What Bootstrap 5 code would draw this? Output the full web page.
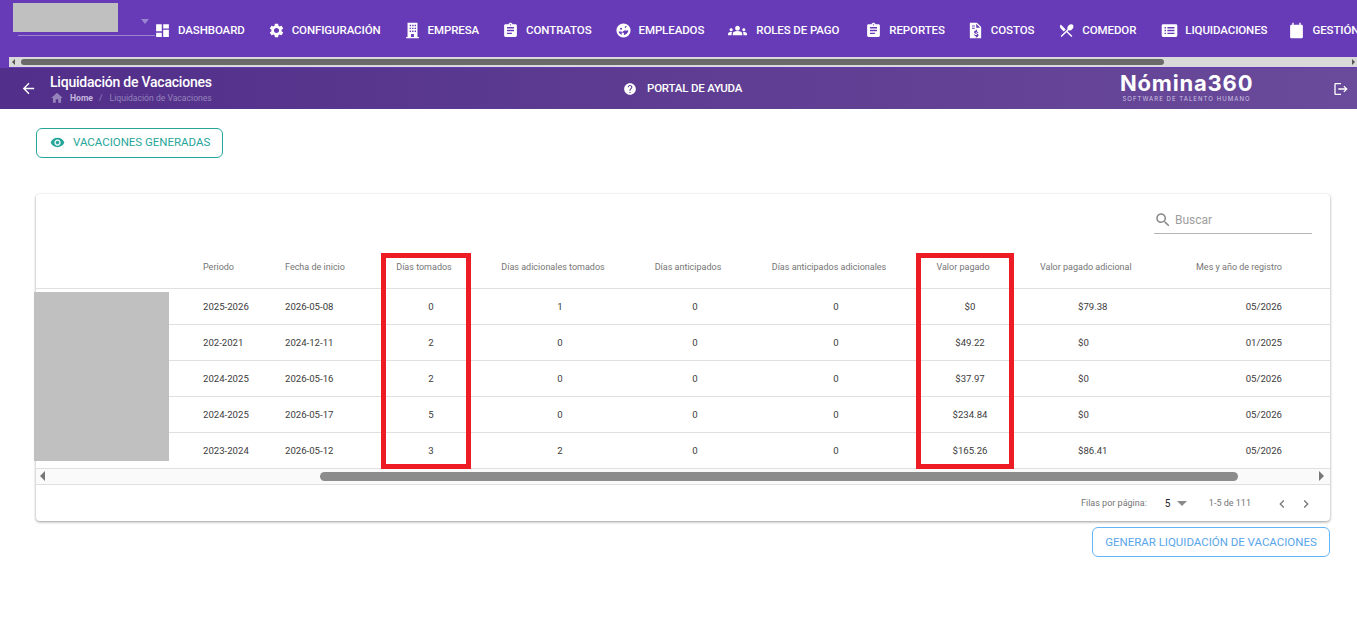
<!DOCTYPE html>
<html lang="es">
<head>
  <meta charset="UTF-8" />
  <meta name="viewport" content="width=device-width, initial-scale=1.0"/>
  <title>Liquidación de Vacaciones - Nómina360</title>
  <link href="https://cdn.jsdelivr.net/npm/bootstrap@5.3.0/dist/css/bootstrap.min.css" rel="stylesheet">
  <style>
    body { font-family: Roboto, sans-serif; background: #fff; overflow: hidden; height: 629px; }
    svg { fill: currentColor; flex: none; display: block; }

    .topbar { background: #673ab7; height: 68px; color: #fff; overflow: hidden; }
    .topbar-row { height: 57px; padding-top: 4px; gap: 22px; white-space: nowrap; }
    .brand-box { width: 131px; height: 57px; flex: none; position: relative; }
    .brand-gray { position: absolute; left: 13px; top: 1px; width: 105px; height: 29px; background: #c0c0c0; }
    .brand-line { position: absolute; left: 18px; top: 33px; width: 137px; height: 1px; background: #9c84d0; }
    .brand-caret { position: absolute; left: 141px; top: 17px; border: 4.5px solid transparent; border-top: 5px solid #9c84d0; border-bottom: 0; }
    .menu-item { gap: 7px; font-size: 11.5px; font-weight: 500; letter-spacing: -.1px; flex: none; }
    .menu-item svg { width: 17px; height: 17px; margin-left: 1px; }
    .menu-item svg.wide { width: 19px; height: 19px; margin: 0 2px; }
    .menu-item:nth-child(8) { margin-left: 3px; }
    .menu-item:nth-child(9) { margin-left: -1px; }
    .menu-item:nth-child(10) { margin-left: 1px; }
    .menu-item:nth-child(11) { margin-left: 2px; }
    .menu-item:nth-child(12) { margin-left: -2px; }
    .top-scroll { height: 10px; margin-left: 9px; background: #d9d9d9; gap: 3px; padding-left: 3px; }
    .top-thumb { width: 1143px; height: 6px; background: #6a6a6a; border-radius: 3px; margin-left: 3px; }
    .arrow-l { width: 0; height: 0; border: 3px solid transparent; border-right: 3px solid #555; border-left: 0; }
    .arrow-r { width: 0; height: 0; border: 3px solid transparent; border-left: 3px solid #555; border-right: 0; margin-left: auto; margin-right: 2px; }

    .subbar { height: 41px; background: linear-gradient(90deg, #512f8a, #6a4a9a); color: #fff; position: relative; }
    .back-col { width: 50px; padding-left: 20px; flex: none; }
    .title-col { width: 559px; flex: none; margin-top: 1px; }
    .page-title { font-size: 14px; font-weight: 500; line-height: 16px; letter-spacing: -.22px; }
    .crumbs { font-size: 8.6px; line-height: 12px; color: #9583bb; gap: 6px; margin-top: 1px; }
    .crumbs b { font-weight: 700; color: #c4b6dd; }
    .crumbs span:last-child { margin-left: 1px; }
    .help-link { width: 495px; flex: none; gap: 10px; font-size: 11.5px; font-weight: 500; letter-spacing: -.2px; margin-left: 14px; }
    .logo-box { width: 133px; flex: none; text-align: center; margin: -2px 0 0 2px; }
    .logo-name { font-family: Inter, sans-serif; font-weight: 700; font-size: 22px; line-height: 22px; letter-spacing: .8px; white-space: nowrap; }
    .logo-sub { font-family: Inter, sans-serif; font-size: 6px; line-height: 8px; letter-spacing: 1.05px; color: #cfc4e2; white-space: nowrap; margin-top: 1px; }

    .btn-teal { display: inline-flex; align-items: center; gap: 8px; height: 30px; width: 187px; padding: 0 0 0 13px; font-size: 11.5px; letter-spacing: -.02px; color: #26a69a; border: 1px solid #26a69a; border-radius: 6px; background: #fff; margin: 19px 0 0 36px; }
    .btn-teal svg { margin-top: -2px; }
    .btn-sky { display: block; height: 30px; width: 238px; padding: 1px 0 0; font-size: 11.5px; letter-spacing: -.02px; color: #58a6ea; border: 1px solid #64b5f6; border-radius: 6px; background: #fff; margin: 6px 27px 0 auto; }

    .data-card { width: 1294px; height: 327px; margin: 36px 0 0 36px; border: 0; border-radius: 4px; box-shadow: 0 1px 3px rgba(0,0,0,.4); position: relative; }
    .search-row { height: 56px; padding: 14px 18px 0 0; }
    .search-box { width: 158px; height: 26px; border-bottom: 1px solid #b5b5b5; font-size: 12px; color: #9e9e9e; gap: 3px; padding-bottom: 1px; }
    .search-box svg { width: 18px; height: 18px; color: #8a8a8a; }

    .vac-table { table-layout: fixed; width: 1294px; margin: 0; font-size: 9.6px; color: #3c3c3c; }
    .vac-table th, .vac-table td { padding: 0; border-bottom: 1px solid #e0e0e0; white-space: nowrap; vertical-align: middle; }
    .vac-table th { height: 38px; padding-bottom: 2px; font-weight: 400; font-size: 9px; color: #757575; }
    .vac-table td { height: 36px; padding-top: 2px; color: #3c3c3c; }
    .pl-16 { padding-left: 16px !important; }
    .shift-h { padding-right: 14px !important; }
    .pay-h { padding-left: 21px !important; }
    .pay-v { padding-left: 59px !important; }
    .pr-16 { padding-right: 16px !important; text-align: right; }

    .table-scroll { height: 16px; background: #fafafa; border-bottom: 1px solid #e0e0e0; padding: 0 6px 0 4px; }
    .thumb-space { width: 275px; flex: none; }
    .table-thumb { width: 918px; height: 9px; border-radius: 5px; background: #8c8c8c; flex: none; }
    .arrow-big-l { width: 0; height: 0; border: 5px solid transparent; border-right: 5px solid #777; border-left: 0; }
    .arrow-big-r { width: 0; height: 0; border: 5px solid transparent; border-left: 5px solid #777; border-right: 0; margin-left: auto; }

    .pager { height: 36px; padding-top: 2px; font-size: 9px; color: #757575; padding-left: 1045px; }
    .pager-size { color: #222; font-size: 10px; margin-left: 18px; width: 12px; }
    .pager-caret { border: 5px solid transparent; border-top: 5px solid #8a8a8a; border-bottom: 0; width: 0; height: 0; }
    .pager-range { margin-left: 22px; width: 65px; }
    .pager svg { width: 16px; height: 16px; color: #777; }

    .red-mark { position: absolute; border: 5px solid #ed1c24; top: 59px; height: 216px; }
    .gray-mark { position: absolute; left: -2px; top: 98px; width: 135px; height: 169px; background: #c0c0c0; }
  </style>
</head>
<body>

<div class="topbar">
  <div class="topbar-row d-flex align-items-center">
    <div class="brand-box">
      <div class="brand-gray"></div>
      <div class="brand-line"></div>
      <div class="brand-caret"></div>
    </div>
    <div class="menu-item d-flex align-items-center"><svg viewBox="0 0 24 24"><path d="M3 13h8V3H3v10zm0 8h8v-6H3v6zm10 0h8V11h-8v10zm0-18v6h8V3h-8z"/></svg>DASHBOARD</div>
    <div class="menu-item d-flex align-items-center"><svg viewBox="0 0 24 24"><path d="M19.14 12.94c.04-.3.06-.61.06-.94 0-.32-.02-.64-.07-.94l2.03-1.58c.18-.14.23-.41.12-.61l-1.92-3.32c-.12-.22-.37-.29-.59-.22l-2.39.96c-.5-.38-1.03-.7-1.62-.94l-.36-2.54c-.04-.24-.24-.41-.48-.41h-3.84c-.24 0-.43.17-.47.41l-.36 2.54c-.59.24-1.13.57-1.62.94l-2.39-.96c-.22-.08-.47 0-.59.22L2.74 8.87c-.12.21-.08.47.12.61l2.03 1.58c-.05.3-.09.63-.09.94s.02.64.07.94l-2.03 1.58c-.18.14-.23.41-.12.61l1.92 3.32c.12.22.37.29.59.22l2.39-.96c.5.38 1.03.7 1.62.94l.36 2.54c.05.24.24.41.48.41h3.84c.24 0 .44-.17.47-.41l.36-2.54c.59-.24 1.13-.56 1.62-.94l2.39.96c.22.08.47 0 .59-.22l1.92-3.32c.12-.22.07-.47-.12-.61l-2.01-1.58zM12 15.6c-1.98 0-3.6-1.62-3.6-3.6s1.62-3.6 3.6-3.6 3.6 1.62 3.6 3.6-1.62 3.6-3.6 3.6z"/></svg>CONFIGURACIÓN</div>
    <div class="menu-item d-flex align-items-center"><svg viewBox="0 0 24 24"><path fill-rule="evenodd" d="M5 1h14v20h2v2H3v-2h2V1zm3 3v2h2V4H8zm3.5 0v2h2V4h-2zM15 4v2h2V4h-2zM8 8v2h2V8H8zm3.5 0v2h2V8h-2zM15 8v2h2V8h-2zM8 12v2h2v-2H8zm3.5 0v2h2v-2h-2zm3.500 0v2h2v-2h-2zM10 17v4h4v-4h-4z"/></svg>EMPRESA</div>
    <div class="menu-item d-flex align-items-center"><svg viewBox="0 0 24 24"><path d="M19 3h-4.180C14.400 1.840 13.300 1 12 1c-1.300 0-2.400.84-2.820 2H5c-1.100 0-2 .9-2 2v14c0 1.100.9 2 2 2h14c1.100 0 2-.9 2-2V5c0-1.100-.9-2-2-2zm-7 0c.55 0 1 .45 1 1s-.45 1-1 1-1-.45-1-1 .45-1 1-1zm2 14H7v-2h7v2zm3-4H7v-2h10v2zm0-4H7V7h10v2z"/></svg>CONTRATOS</div>
    <div class="menu-item d-flex align-items-center"><svg viewBox="0 0 24 24"><path fill-rule="evenodd" d="M12 2a10 10 0 1 0 0 20 10 10 0 0 0 0-20zM7 9.500a1.500 1.500 0 1 1 3 0 1.500 1.500 0 0 1-3 0zm7-3.500h3l-3 3zM13 12h6c-.4 3-3 6-6.500 6.500V15H9l4-3zM5 13.500h4.500V18C7 17.500 5.500 15.500 5 13.500z"/></svg>EMPLEADOS</div>
    <div class="menu-item d-flex align-items-center"><svg class="wide" viewBox="0 0 24 24"><path d="M12 12.750c1.630 0 3.070.39 4.240.9 1.080.48 1.760 1.560 1.760 2.730V18H6v-1.610c0-1.180.68-2.260 1.760-2.730 1.170-.52 2.610-.91 4.240-.91zM4 13c1.100 0 2-.9 2-2s-.9-2-2-2-2 .9-2 2 .9 2 2 2zm1.130 1.100c-.37-.06-.74-.1-1.130-.1-.99 0-1.930.21-2.780.58C.48 14.900 0 15.620 0 16.430V18h4.500v-1.610c0-.83.23-1.610.63-2.290zM20 13c1.100 0 2-.9 2-2s-.9-2-2-2-2 .9-2 2 .9 2 2 2zm4 3.430c0-.81-.48-1.530-1.220-1.850-.85-.37-1.790-.58-2.780-.58-.39 0-.76.04-1.130.1.4.68.63 1.460.63 2.290V18H24v-1.570zM12 6c1.660 0 3 1.340 3 3s-1.340 3-3 3-3-1.340-3-3 1.340-3 3-3z"/></svg>ROLES DE PAGO</div>
    <div class="menu-item d-flex align-items-center"><svg viewBox="0 0 24 24"><path d="M19 3h-4.180C14.400 1.840 13.300 1 12 1c-1.300 0-2.400.84-2.820 2H5c-1.100 0-2 .9-2 2v14c0 1.100.9 2 2 2h14c1.100 0 2-.9 2-2V5c0-1.100-.9-2-2-2zm-7 0c.55 0 1 .45 1 1s-.45 1-1 1-1-.45-1-1 .45-1 1-1zm2 14H7v-2h7v2zm3-4H7v-2h10v2zm0-4H7V7h10v2z"/></svg>REPORTES</div>
    <div class="menu-item d-flex align-items-center"><svg viewBox="0 0 24 24"><path fill-rule="evenodd" d="M4 1h10l6 6v16H4V1zm9 1.500V8h5.500L13 2.500zM7 5v1.500h4V5H7zm0 3v1.500h4V8H7zm5.400 3v1.100c-1.500.3-2.400 1.200-2.400 2.300 0 1.300 1.100 1.900 2.500 2.300 1.200.3 1.500.6 1.500 1 0 .4-.4.8-1.300.8-1 0-1.400-.4-1.500-1H9.900c.1 1.300 1 2 2.500 2.300V22h1.600v-.9c1.400-.3 2.300-1.100 2.300-2.400 0-1.500-1.200-2.100-2.600-2.400-1.100-.3-1.500-.5-1.500-1 0-.4.4-.7 1.100-.7.9 0 1.200.3 1.300 1h1.400c-.1-1.100-.8-2-2-2.300V11h-1.600z"/></svg>COSTOS</div>
    <div class="menu-item d-flex align-items-center"><svg viewBox="0 0 24 24"><path d="M8.100 13.340l2.830-2.830L3.910 3.500c-1.560 1.560-1.560 4.090 0 5.660l4.190 4.180zm6.780-1.810c1.530.71 3.680.21 5.270-1.380 1.910-1.910 2.280-4.650.81-6.120-1.460-1.460-4.200-1.100-6.120.81-1.590 1.590-2.090 3.740-1.380 5.270L3.700 19.870l1.410 1.410L12 14.410l6.880 6.880 1.410-1.410L13.410 13l1.470-1.470z"/></svg>COMEDOR</div>
    <div class="menu-item d-flex align-items-center"><svg viewBox="0 0 24 24"><path fill-rule="evenodd" d="M3 3h18a2 2 0 0 1 2 2v14a2 2 0 0 1-2 2H3a2 2 0 0 1-2-2V5a2 2 0 0 1 2-2zm2 4v2h2V7H5zm4 0v2h10V7H9zm-4 4v2h2v-2H5zm4 0v2h10v-2H9zm-4 4v2h2v-2H5zm4 0v2h10v-2H9z"/></svg>LIQUIDACIONES</div>
    <div class="menu-item d-flex align-items-center"><svg viewBox="0 0 24 24"><path d="M6 1h2v3h8V1h2v3h1c1.100 0 2 .9 2 2v15c0 1.100-.9 2-2 2H5c-1.100 0-2-.9-2-2V6c0-1.100.9-2 2-2h1V1z"/></svg>GESTIÓN</div>
  </div>
  <div class="top-scroll d-flex align-items-center">
    <span class="arrow-l"></span>
    <div class="top-thumb"></div>
    <span class="arrow-r"></span>
  </div>
</div>

<div class="subbar d-flex align-items-center">
  <div class="back-col"><svg width="17" height="17" viewBox="0 0 24 24"><path d="M20 11H7.830l5.590-5.590L12 4l-8 8 8 8 1.410-1.410L7.830 13H20v-2z"/></svg></div>
  <div class="title-col">
    <div class="page-title">Liquidación de Vacaciones</div>
    <div class="crumbs d-flex align-items-center">
      <svg width="14" height="14" viewBox="0 0 24 24"><path d="M10 20v-6h4v6h5v-8h3L12 3 2 12h3v8z"/></svg>
      <b>Home</b><span>/</span><span>Liquidación de Vacaciones</span>
    </div>
  </div>
  <div class="help-link d-flex align-items-center"><svg width="14" height="14" viewBox="0 0 24 24"><path d="M12 2C6.480 2 2 6.480 2 12s4.480 10 10 10 10-4.480 10-10S17.520 2 12 2zm1 17h-2v-2h2v2zm2.070-7.750l-.9.92C13.450 12.900 13 13.500 13 15h-2v-.5c0-1.100.45-2.100 1.170-2.830l1.240-1.260c.37-.36.59-.86.59-1.410 0-1.100-.9-2-2-2s-2 .9-2 2H8c0-2.210 1.790-4 4-4s4 1.790 4 4c0 .88-.36 1.680-.93 2.250z"/></svg>PORTAL DE AYUDA</div>
  <div class="logo-box">
    <div class="logo-name">Nómina360</div>
    <div class="logo-sub">SOFTWARE DE TALENTO HUMANO</div>
  </div>
  <svg class="ms-auto me-2" width="16" height="16" viewBox="0 0 24 24"><path d="M17 7l-1.410 1.410L18.170 11H8v2h10.170l-2.580 2.580L17 17l5-5zM4 5h8V3H4c-1.100 0-2 .9-2 2v14c0 1.100.9 2 2 2h8v-2H4V5z"/></svg>
</div>

<button class="btn-teal" type="button"><svg width="15" height="15" viewBox="0 0 24 24"><path d="M12 4.500C7 4.500 2.730 7.610 1 12c1.730 4.390 6 7.500 11 7.500s9.270-3.110 11-7.500c-1.730-4.390-6-7.500-11-7.500zM12 17c-2.760 0-5-2.240-5-5s2.240-5 5-5 5 2.240 5 5-2.240 5-5 5zm0-8c-1.660 0-3 1.340-3 3s1.340 3 3 3 3-1.340 3-3-1.340-3-3-3z"/></svg>VACACIONES GENERADAS</button>

<div class="card data-card">
  <div class="search-row d-flex justify-content-end">
    <div class="search-box d-flex align-items-center"><svg viewBox="0 0 24 24"><path d="M15.500 14h-.79l-.28-.27C15.410 12.590 16 11.110 16 9.500 16 5.910 13.090 3 9.500 3S3 5.910 3 9.500 5.910 16 9.500 16c1.610 0 3.090-.59 4.230-1.570l.27.28v.79l5 4.990L20.490 19l-4.990-5zm-6 0C7.010 14 5 11.990 5 9.500S7.010 5 9.500 5 14 7.010 14 9.500 11.990 14 9.500 14z"/></svg>Buscar</div>
  </div>

  <table class="table vac-table">
    <colgroup>
      <col style="width:151px"><col style="width:82px"><col style="width:112px"><col style="width:100px"><col style="width:158px"><col style="width:112px"><col style="width:170px"><col style="width:98px"><col style="width:129px"><col style="width:150px"><col style="width:32px">
    </colgroup>
    <thead>
      <tr>
        <th></th>
        <th class="pl-16">Periodo</th>
        <th class="pl-16">Fecha de inicio</th>
        <th class="text-center shift-h">Días tomados</th>
        <th class="text-center shift-h">Días adicionales tomados</th>
        <th class="text-center shift-h">Días anticipados</th>
        <th class="text-center shift-h">Días anticipados adicionales</th>
        <th class="text-center shift-h">Valor pagado</th>
        <th class="pay-h">Valor pagado adicional</th>
        <th class="pr-16">Mes y año de registro</th>
        <th></th>
      </tr>
    </thead>
    <tbody id="filas"></tbody>
  </table>

  <div class="table-scroll d-flex align-items-center">
    <span class="arrow-big-l"></span>
    <div class="thumb-space"></div>
    <div class="table-thumb"></div>
    <span class="arrow-big-r"></span>
  </div>

  <div class="pager d-flex align-items-center">
    <span>Filas por página:</span>
    <span class="pager-size">5</span>
    <span class="pager-caret"></span>
    <span class="pager-range">1-5 de 111</span>
    <svg viewBox="0 0 24 24"><path d="M15.410 7.410L14 6l-6 6 6 6 1.410-1.410L10.830 12z"/></svg>
    <svg class="ms-2" viewBox="0 0 24 24"><path d="M10 6L8.590 7.410 13.170 12l-4.580 4.590L10 18l6-6z"/></svg>
  </div>

  <div class="gray-mark"></div>
  <div class="red-mark" id="mark-dias"></div>
  <div class="red-mark" id="mark-valor"></div>
</div>

<button class="btn-sky" type="button">GENERAR LIQUIDACIÓN DE VACACIONES</button>

<script>
const filas = [
  ["2025-2026", "2026-05-08", "0", "1", "0", "0", "$0", "$79.38", "05/2026"],
  ["202-2021", "2024-12-11", "2", "0", "0", "0", "$49.22", "$0", "01/2025"],
  ["2024-2025", "2026-05-16", "2", "0", "0", "0", "$37.97", "$0", "05/2026"],
  ["2024-2025", "2026-05-17", "5", "0", "0", "0", "$234.84", "$0", "05/2026"],
  ["2023-2024", "2026-05-12", "3", "2", "0", "0", "$165.26", "$86.41", "05/2026"]
];
document.getElementById("filas").innerHTML = filas.map(f => `<tr>
  <td></td>
  <td class="pl-16">${f[0]}</td>
  <td class="pl-16">${f[1]}</td>
  <td class="text-center">${f[2]}</td>
  <td class="text-center">${f[3]}</td>
  <td class="text-center">${f[4]}</td>
  <td class="text-center">${f[5]}</td>
  <td class="text-center">${f[6]}</td>
  <td class="pay-v">${f[7]}</td>
  <td class="pr-16">${f[8]}</td>
  <td></td>
</tr>`).join("");
// recuadros rojos sobre las columnas
document.getElementById("mark-dias").style.cssText = "left:345px;width:90px";
document.getElementById("mark-valor").style.cssText = "left:880px;width:98px";
</script>
</body>
</html>
